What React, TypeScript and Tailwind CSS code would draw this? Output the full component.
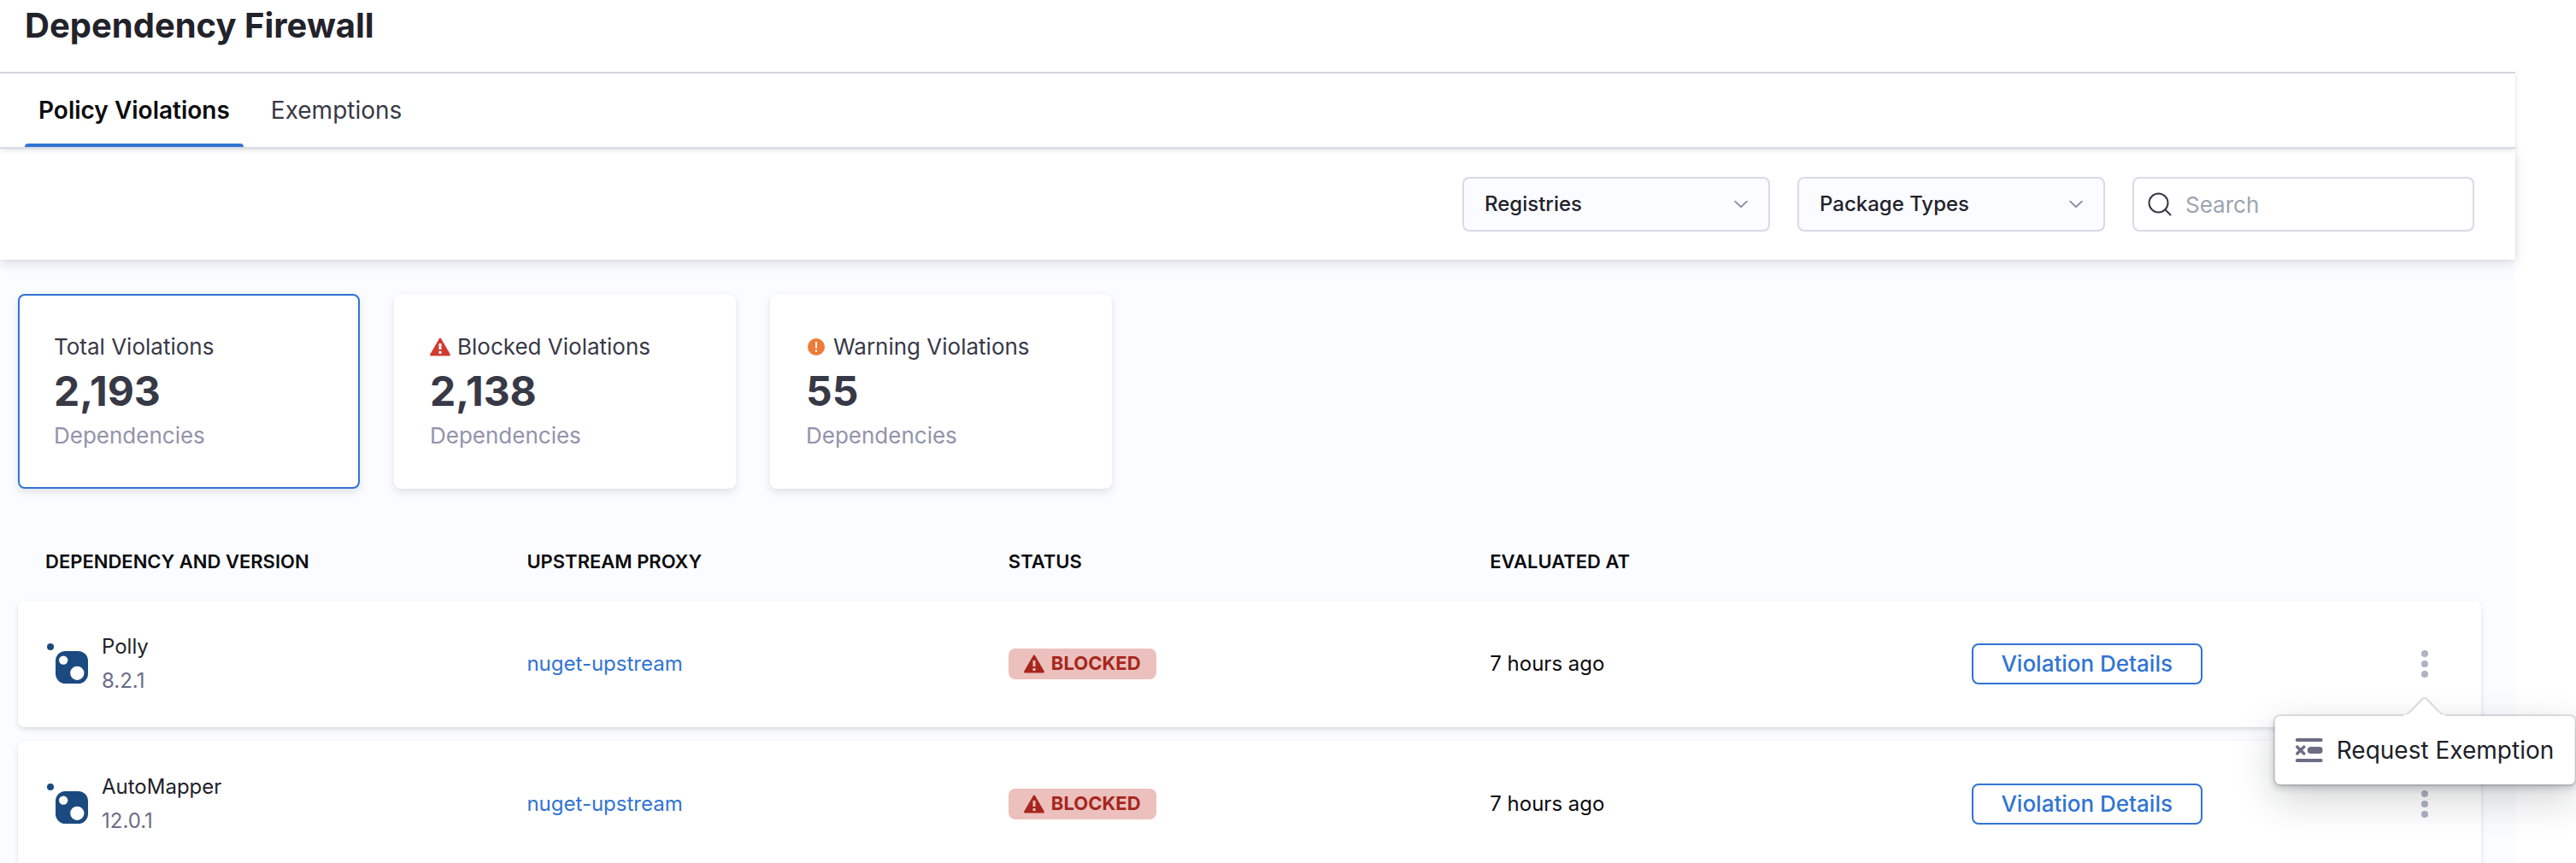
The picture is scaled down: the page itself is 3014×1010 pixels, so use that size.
import { useState, type ReactNode } from 'react'

interface Violation {
  name: string
  version: string
  proxy: string
  status: string
  evaluatedAt: string
}

interface SummaryCardProps {
  title: string
  count: string
  icon?: ReactNode
  selected?: boolean
  onClick: () => void
}

const violations: Violation[] = [
  { name: 'Polly', version: '8.2.1', proxy: 'nuget-upstream', status: 'BLOCKED', evaluatedAt: '7 hours ago' },
  { name: 'AutoMapper', version: '12.0.1', proxy: 'nuget-upstream', status: 'BLOCKED', evaluatedAt: '7 hours ago' },
]

const tabs = ['Policy Violations', 'Exemptions']

const BlockedIcon = ({ className }: { className: string }) => (
  <svg className={className} viewBox="0 0 24 22" aria-hidden="true">
    <path
      fill="currentColor"
      fillRule="evenodd"
      d="M10.9 1.2a1.3 1.3 0 0 1 2.2 0l10.6 18.3c.5.9-.1 2-1.1 2H1.4c-1 0-1.6-1.1-1.1-2zM10.5 7v7h3V7zM10.5 16v3h3v-3z"
    />
  </svg>
)

const WarningIcon = () => (
  <svg className="h-6 w-6 text-[#ee7b37]" viewBox="-2 -2 24 24" aria-hidden="true">
    <path
      fill="currentColor"
      fillRule="evenodd"
      d="M10 0a10 10 0 1 0 0 20a10 10 0 0 0 0-20zM9 4v7.5h2V4zM9 13.5v2.5h2v-2.5z"
    />
  </svg>
)

const NugetIcon = () => (
  <svg className="h-12 w-[50px] shrink-0" viewBox="-2 0 50 48" aria-hidden="true">
    <circle cx="4" cy="4" r="4" fill="#1b4a80" />
    <rect x="10" y="9" width="38" height="38" rx="11.5" fill="#1b4a80" />
    <circle cx="19.2" cy="19.6" r="5.2" fill="#fff" />
    <circle cx="35.3" cy="34.8" r="8.1" fill="#fff" />
  </svg>
)

const ExemptionIcon = () => (
  <svg className="h-7 w-8" viewBox="0 0 32 28" fill="none" stroke="#6b6d85" strokeLinecap="round" aria-hidden="true">
    <path strokeWidth="4" d="M2 2h28M2 26h28" />
    <path strokeWidth="8" d="M18 14h10" />
    <path strokeWidth="3.4" d="M2 10l8 8M10 10l-8 8" />
  </svg>
)

const FilterSelect = ({ label }: { label: string }) => (
  <div className="relative w-[360px]">
    <select
      aria-label={label}
      className="h-16 w-full appearance-none rounded-lg border-2 border-[#d9dae5] bg-[#fafcff] px-6 text-2xl font-medium text-[#22222a]"
    >
      <option>{label}</option>
    </select>
    <svg className="pointer-events-none absolute top-7 right-[26px] h-2 w-4" viewBox="0 0 16 8" fill="none" aria-hidden="true">
      <path d="M1 0.5l7 6.8l7-6.8" stroke="#9293ab" strokeWidth="2" strokeLinecap="round" strokeLinejoin="round" />
    </svg>
  </div>
)

const SummaryCard = ({ title, count, icon, selected = false, onClick }: SummaryCardProps) => (
  <button
    type="button"
    onClick={onClick}
    className={`flex w-[400px] flex-col items-start gap-2 rounded-lg border-2 bg-white px-10 py-11 text-left shadow-[0_0_2px_rgba(40,41,61,0.04),0_4px_8px_rgba(96,97,112,0.16)] ${
      selected ? 'border-[#3174d4]' : 'border-white'
    }`}
  >
    <span className="flex items-center gap-2 text-[26px] leading-8 text-[#383946]">
      {icon}
      {title}
    </span>
    <span className="text-5xl leading-14 font-bold text-[#383946]">{count}</span>
    <span className="text-[26px] leading-8 text-[#9293ab]">Dependencies</span>
  </button>
)

const RequestMenu = () => (
  <div
    role="menu"
    className="absolute top-full left-1/2 z-20 mt-[37px] -translate-x-1/2 rounded-md bg-white shadow-[0_0_0_2px_rgba(16,22,26,0.1),0_4px_8px_rgba(16,22,26,0.2),0_16px_48px_rgba(16,22,26,0.2)]"
  >
    <svg className="absolute bottom-full left-1/2 h-6 w-14 -translate-x-1/2" viewBox="0 0 56 24" aria-hidden="true">
      <path d="M2 23C8 23 10 20 13 17L25.500 4Q28 1.500 30.500 4L43 17C46 20 48 23 54 23" fill="#fff" stroke="#d8d9da" strokeWidth="2" />
    </svg>
    <span className="absolute -top-0.5 left-1/2 h-1 w-12 -translate-x-1/2 bg-white" />
    <button
      type="button"
      role="menuitem"
      className="flex h-20 items-center gap-4 px-6 text-[28px] leading-8 whitespace-nowrap text-[#1c2127]"
    >
      <ExemptionIcon />
      Request Exemption
    </button>
  </div>
)

export default function App() {
  const [activeTab, setActiveTab] = useState(tabs[0])
  const [selectedCard, setSelectedCard] = useState('total')
  const [openMenu, setOpenMenu] = useState<string | null>('Polly')

  return (
    <div className="h-screen overflow-hidden bg-white pr-[71px] font-['Inter',sans-serif] text-[#0b0b0d]">
      <main className="min-h-full bg-[#fafcff]">
        <header className="border-b-2 border-[#d9dae5] bg-white px-[29px] pt-1 pb-7">
          <h1 className="text-[40px] leading-13 font-bold text-[#22222a]">Dependency Firewall</h1>
        </header>

        <div
          role="tablist"
          className="relative z-10 flex gap-4 border-b-2 border-[#d9dae5] bg-white px-[29px] shadow-[0_0_2px_rgba(40,41,61,0.08),0_2px_6px_rgba(96,97,112,0.16)]"
        >
          {tabs.map((tab) => (
            <button
              key={tab}
              type="button"
              role="tab"
              aria-selected={activeTab === tab}
              onClick={() => setActiveTab(tab)}
              className="relative h-[86px] px-4 text-[28px]"
            >
              <span className={activeTab === tab ? 'font-semibold text-[#0b0b0d]' : 'text-[#383946]'}>{tab}</span>
              {activeTab === tab && <span className="absolute inset-x-0 bottom-0 h-1 rounded-t-sm bg-[#3174d4]" />}
            </button>
          ))}
        </div>

        <div className="flex justify-end gap-8 bg-white px-12 py-[33px] shadow-[0_0_4px_rgba(40,41,61,0.06),0_4px_12px_rgba(96,97,112,0.2)]">
          <FilterSelect label="Registries" />
          <FilterSelect label="Package Types" />
          <label className="flex h-16 w-[400px] items-center gap-4 rounded-lg border-2 border-[#d9dae5] bg-white px-4">
            <svg className="h-7 w-7 shrink-0" viewBox="0 0 28 28" fill="none" stroke="#383946" strokeWidth="2" aria-hidden="true">
              <circle cx="12.500" cy="12.500" r="11" />
              <path d="M20.500 20.500l6 6" strokeLinecap="round" />
            </svg>
            <input
              type="search"
              aria-label="Search"
              placeholder="Search"
              className="w-full bg-transparent text-[26px] outline-none placeholder:text-[#9aa5b1]"
            />
          </label>
        </div>

        <section className="pt-10 pr-10 pl-[21px]">
          <div className="flex gap-10">
            <SummaryCard
              title="Total Violations"
              count="2,193"
              selected={selectedCard === 'total'}
              onClick={() => setSelectedCard('total')}
            />
            <SummaryCard
              title="Blocked Violations"
              count="2,138"
              icon={<BlockedIcon className="h-[22px] w-6 text-[#cf3c2e]" />}
              selected={selectedCard === 'blocked'}
              onClick={() => setSelectedCard('blocked')}
            />
            <SummaryCard
              title="Warning Violations"
              count="55"
              icon={<WarningIcon />}
              selected={selectedCard === 'warning'}
              onClick={() => setSelectedCard('warning')}
            />
          </div>

          <table className="mt-10 w-full table-fixed border-separate border-spacing-x-0 border-spacing-y-4 text-2xl">
            <thead>
              <tr className="h-[59px] text-left text-[22px]">
                <th className="w-[19.55%] pl-8 font-semibold">DEPENDENCY AND VERSION</th>
                <th className="w-[19.55%] pl-8 font-semibold">UPSTREAM PROXY</th>
                <th className="w-[19.55%] pl-8 font-semibold">STATUS</th>
                <th className="w-[19.55%] pl-8 font-semibold">EVALUATED AT</th>
                <th aria-label="Details" />
                <th aria-label="Actions" className="w-[160px]" />
              </tr>
            </thead>
            <tbody>
              {violations.map((violation) => (
                <tr
                  key={violation.name}
                  className="h-[148px] rounded-lg shadow-[0_0_2px_rgba(40,41,61,0.04),0_3px_6px_-1px_rgba(96,97,112,0.24)]"
                >
                  <td className="rounded-l-lg bg-white pl-8">
                    <div className="flex items-center gap-4">
                      <NugetIcon />
                      <div className="leading-10">
                        <p className="text-[#22222a]">{violation.name}</p>
                        <p className="text-[#6b6d85]">{violation.version}</p>
                      </div>
                    </div>
                  </td>
                  <td className="bg-white pl-8">
                    <a href="#" className="text-[#3174d4] hover:underline">
                      {violation.proxy}
                    </a>
                  </td>
                  <td className="bg-white pl-8">
                    <span className="inline-flex h-9 items-center gap-2 rounded-lg bg-[#ecc0bd] px-[18px] align-middle text-[22px] font-bold text-[#a6261d]">
                      <BlockedIcon className="h-[22px] w-6" />
                      {violation.status}
                    </span>
                  </td>
                  <td className="bg-white pl-8">{violation.evaluatedAt}</td>
                  <td className="bg-white pl-8">
                    <button
                      type="button"
                      className="h-12 w-[270px] rounded-lg border-2 border-[#3174d4] text-[26px] leading-8 font-medium text-[#3174d4]"
                    >
                      Violation Details
                    </button>
                  </td>
                  <td className="rounded-r-lg bg-white pr-[50px]">
                    <div className="relative ml-auto h-12 w-8">
                      <button
                        type="button"
                        aria-label="More actions"
                        onClick={() => setOpenMenu(openMenu === violation.name ? null : violation.name)}
                        className="flex h-full w-full flex-col items-center justify-center gap-1"
                      >
                        <span className="h-2 w-2 rounded-full bg-[#b0b1c3]" />
                        <span className="h-2 w-2 rounded-full bg-[#b0b1c3]" />
                        <span className="h-2 w-2 rounded-full bg-[#b0b1c3]" />
                      </button>
                      {openMenu === violation.name && <RequestMenu />}
                    </div>
                  </td>
                </tr>
              ))}
            </tbody>
          </table>
        </section>
      </main>
    </div>
  )
}
